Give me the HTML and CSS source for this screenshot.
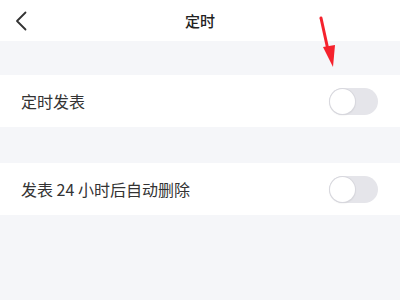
FILE: index.html
```html
<!DOCTYPE html>
<html lang="zh">
<head>
<meta charset="utf-8">
<link rel="stylesheet" href="styles.css">
</head>
<body>
<div class="page">
  <header class="nav">
    <svg class="back" width="12" height="20" viewBox="0 0 12 20"><path d="M10.5 1.5 L2 10 L10.5 18.5" fill="none" stroke="#333" stroke-width="1.8" stroke-linecap="round" stroke-linejoin="round"/></svg>
    <div class="title">定时</div>
  </header>
  <div class="gap"></div>
  <div class="row"><span class="label">定时发表</span><span class="switch"><span class="knob"></span></span></div>
  <div class="gap gap2"></div>
  <div class="row"><span class="label">发表 24 小时后自动删除</span><span class="switch"><span class="knob"></span></span></div>
  <div class="rest"></div>
  <svg class="arrow" width="30" height="60" viewBox="0 0 30 60"><path d="M9 6 L16 38" stroke="#f5222d" stroke-width="3" stroke-linecap="round"/><path d="M11 35 L23 33 L21 55 Z" fill="#f5222d"/></svg>
</div>
</body>
</html>
```
FILE: styles.css
```css
* { box-sizing: border-box; }
html, body { margin: 0; padding: 0; }
body { font-family: "Noto Sans CJK SC", "Noto Sans", sans-serif; background: #f5f6f9; }
.page { position: relative; width: 400px; height: 300px; overflow: hidden; display: flex; flex-direction: column; }
.nav { height: 41px; background: #fff; position: relative; display: flex; align-items: center; justify-content: center; }
.back { position: absolute; left: 15px; top: 11px; }
.title { font-size: 15px; color: #222; font-weight: 500; }
.gap { height: 34px; background: #f5f6f9; }
.gap2 { height: 36px; }
.row { height: 52px; background: #fff; display: flex; align-items: center; justify-content: space-between; padding: 0 22px 0 21px; }
.label { font-size: 16px; color: #333; }
.switch { width: 49px; height: 27px; border-radius: 14px; background: #e5e5ea; position: relative; }
.knob { position: absolute; left: 1px; top: 1px; width: 25px; height: 25px; border-radius: 50%; background: #fff; box-shadow: 0 0 0 1px #d8d8de, 0 1px 2px rgba(0,0,0,0.12); }
.rest { flex: 1; background: #f5f6f9; }
.arrow { position: absolute; left: 312px; top: 12px; }
```
